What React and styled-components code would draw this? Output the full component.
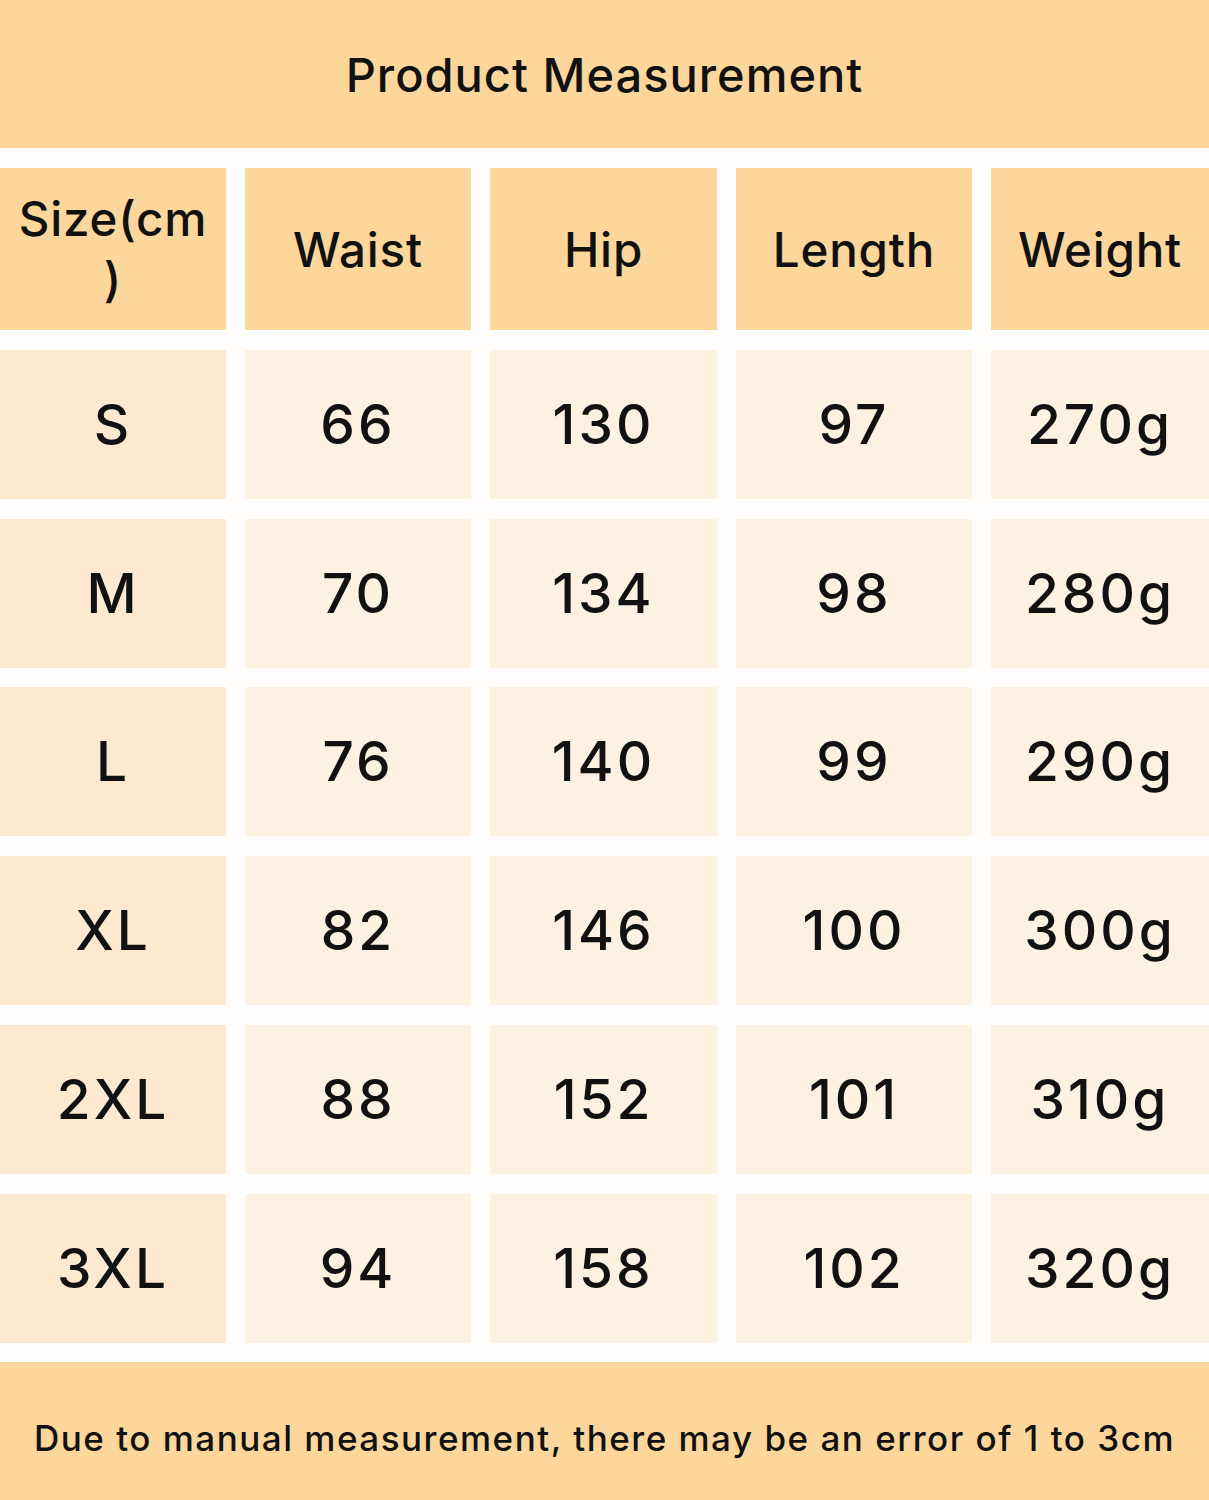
import React from "react";
import styled, { createGlobalStyle } from "styled-components";

const GlobalStyle = createGlobalStyle`
  html, body {
    margin: 0;
    padding: 0;
    background: #ffffff;
  }
  body {
    font-family: Inter, "Noto Sans", "Liberation Sans", sans-serif;
    color: #111111;
  }
`;

const Page = styled.div`
  width: 1209px;
  height: 1500px;
  display: flex;
  flex-direction: column;
  background: #fffdfb;
`;

const TitleBar = styled.div`
  height: 148px;
  background: #fdd69c;
  display: flex;
  align-items: center;
  justify-content: center;
`;

const Title = styled.h1`
  margin: 0;
  font-size: 47px;
  font-weight: 500;
  letter-spacing: 1px;
  color: #111;
`;

const Table = styled.div`
  margin-top: 20px;
  display: grid;
  grid-template-columns: 226px 226px 227px 236px 1fr;
  grid-template-rows: 162px repeat(6, 149px);
  column-gap: 19px;
  row-gap: 19.8px;
`;

const Cell = styled.div`
  background: ${(p) =>
    p.$head ? "#fdd69c" : p.$first ? "#fde9d0" : "#fdf1e2"};
  display: flex;
  align-items: center;
  justify-content: center;
  text-align: center;
  font-size: ${(p) => (p.$head ? "47.5px" : "55px")};
  font-weight: 500;
  letter-spacing: ${(p) => (p.$head ? "0.8px" : "3px")};
  line-height: 61px;
  color: #111;
`;

const Footer = styled.div`
  margin-top: 19px;
  flex: 1;
  background: #fdd69c;
  display: flex;
  align-items: center;
  justify-content: center;
  padding-top: 14px;
`;

const Note = styled.p`
  margin: 0;
  font-size: 35px;
  font-weight: 500;
  letter-spacing: 1.5px;
  color: #111;
`;

const headers = [
  <>
    Size(cm
    <br />)
  </>,
  "Waist",
  "Hip",
  "Length",
  "Weight",
];

const rows = [
  ["S", "66", "130", "97", "270g"],
  ["M", "70", "134", "98", "280g"],
  ["L", "76", "140", "99", "290g"],
  ["XL", "82", "146", "100", "300g"],
  ["2XL", "88", "152", "101", "310g"],
  ["3XL", "94", "158", "102", "320g"],
];

export default function App() {
  return (
    <>
      <GlobalStyle />
      <Page>
        <TitleBar>
          <Title>Product Measurement</Title>
        </TitleBar>
        <Table>
          {headers.map((h, i) => (
            <Cell key={i} $head>
              <span>{h}</span>
            </Cell>
          ))}
          {rows.map((r) =>
            r.map((v, i) => (
              <Cell key={r[0] + i} $first={i === 0}>
                {v}
              </Cell>
            ))
          )}
        </Table>
        <Footer>
          <Note>
            Due to manual measurement, there may be an error of 1 to 3cm
          </Note>
        </Footer>
      </Page>
    </>
  );
}
